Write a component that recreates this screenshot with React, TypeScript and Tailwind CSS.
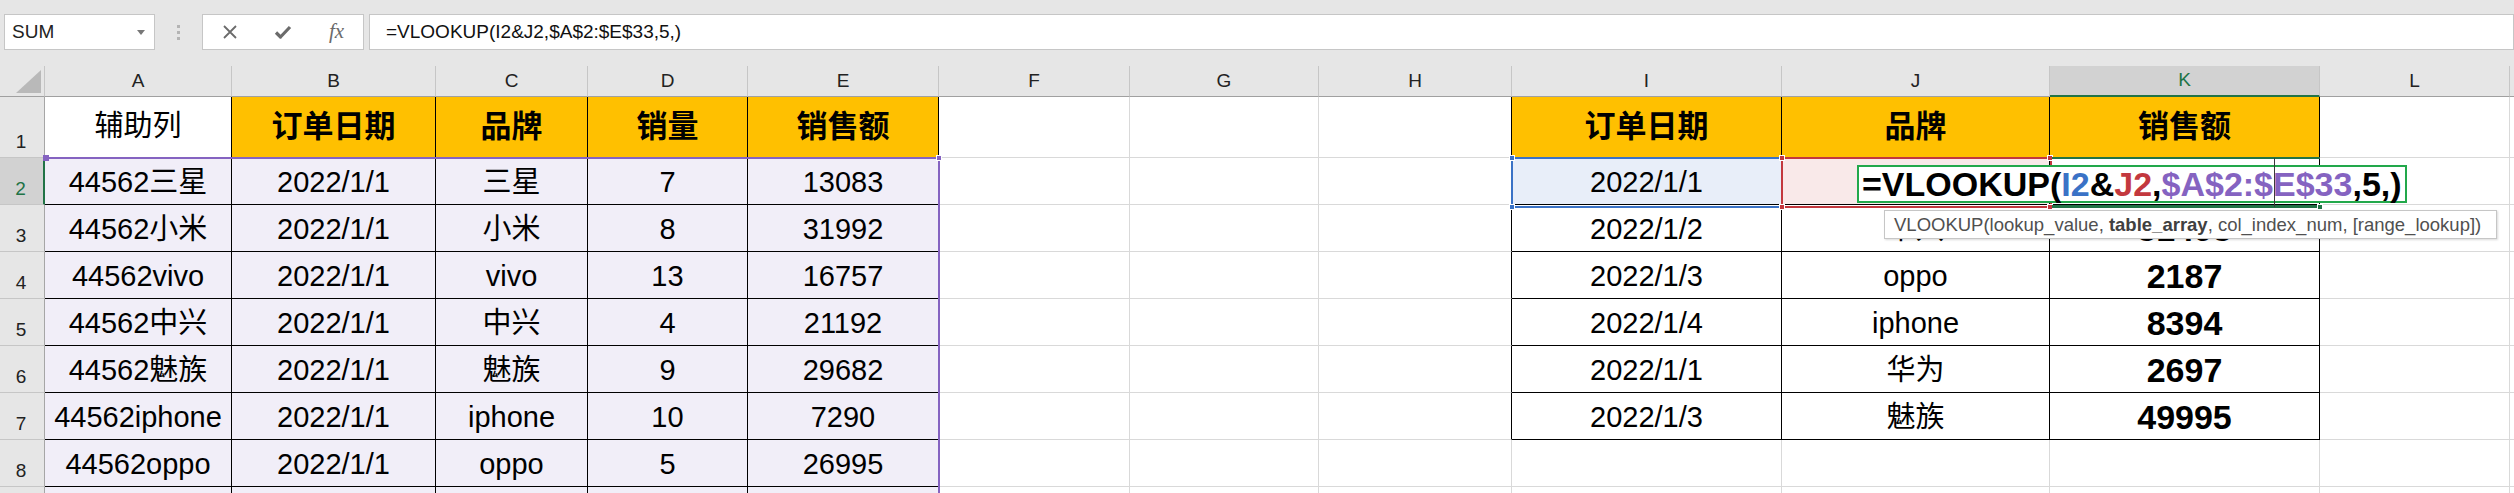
import React from "react";

const letters = ["", "A", "B", "C", "D", "E", "F", "G", "H", "I", "J", "K", "L", "M"];

const leftRows = [
  ["44562三星", "2022/1/1", "三星", "7", "13083"],
  ["44562小米", "2022/1/1", "小米", "8", "31992"],
  ["44562vivo", "2022/1/1", "vivo", "13", "16757"],
  ["44562中兴", "2022/1/1", "中兴", "4", "21192"],
  ["44562魅族", "2022/1/1", "魅族", "9", "29682"],
  ["44562iphone", "2022/1/1", "iphone", "10", "7290"],
  ["44562oppo", "2022/1/1", "oppo", "5", "26995"],
  ["", "", "", "", ""],
];

const rightRows = [
  ["2022/1/1", "", ""],
  ["2022/1/2", "中兴", "31493"],
  ["2022/1/3", "oppo", "2187"],
  ["2022/1/4", "iphone", "8394"],
  ["2022/1/1", "华为", "2697"],
  ["2022/1/3", "魅族", "49995"],
];

// text of a sheet cell, rows numbered like Excel (1..9), columns 1..13
function cellText(r: number, c: number): string {
  if (r === 1) {
    const head: Record<number, string> = { 1: "辅助列", 2: "订单日期", 3: "品牌", 4: "销量", 5: "销售额", 9: "订单日期", 10: "品牌", 11: "销售额" };
    return head[c] ?? "";
  }
  if (c >= 1 && c <= 5) return leftRows[r - 2]?.[c - 1] ?? "";
  if (c >= 9 && c <= 11 && r <= 7) return rightRows[r - 2]?.[c - 9] ?? "";
  return "";
}

function cellClass(r: number, c: number): string {
  const inLeft = c >= 1 && c <= 5;
  const inRight = c >= 9 && c <= 11 && r <= 7;
  let cls = "flex items-center justify-center overflow-hidden whitespace-nowrap border-r border-b ";

  if (r === 1) {
    if (c === 1) return cls + "bg-white border-black text-[29px]";
    if ((c >= 2 && c <= 5) || inRight) return cls + "bg-[#ffc000] border-black text-[31px] font-bold";
    if (c === 8) return cls + "bg-white border-r-black border-b-[#d9d9d9]";
    return cls + "bg-white border-[#d9d9d9]";
  }

  cls += "pt-[3px] text-[29px] ";
  if (inLeft) return cls + "bg-[#f1eef8] border-black";
  if (inRight) {
    if (r === 2 && c === 9) return cls + "bg-[#e8eef9] border-black";
    if (r === 2 && c === 10) return cls + "bg-[#f9e9e9] border-black";
    if (c === 11) return cls + "bg-white border-black text-[34px] font-bold";
    return cls + "bg-white border-black";
  }
  if (c === 8 && r <= 7) return cls + "bg-white border-r-black border-b-[#d9d9d9]";
  return cls + "bg-white border-[#d9d9d9]";
}

function Toolbar() {
  return (
    <div className="flex h-[66px] items-start bg-[#e6e6e6] pl-[4px] pt-[14px]">
      <div className="flex h-[36px] w-[151px] items-center justify-between border border-[#c6c6c6] bg-white pl-[7px] pr-[9px] text-[19px] text-[#222]">
        <span>SUM</span>
        <span className="h-0 w-0 border-x-[4px] border-t-[5px] border-x-transparent border-t-[#777]" />
      </div>
      <div className="flex h-[36px] w-[47px] flex-col items-center justify-center gap-[3px]">
        <span className="h-[3px] w-[3px] bg-[#b4b4b4]" />
        <span className="h-[3px] w-[3px] bg-[#b4b4b4]" />
        <span className="h-[3px] w-[3px] bg-[#b4b4b4]" />
      </div>
      <div className="flex h-[36px] w-[162px] items-center border border-[#c6c6c6] bg-white">
        <div className="flex w-[53px] justify-center">
          <svg width="16" height="16" viewBox="0 0 16 16">
            <path d="M2 2 L14 14 M14 2 L2 14" stroke="#6b6b6b" strokeWidth="1.8" fill="none" />
          </svg>
        </div>
        <div className="flex w-[54px] justify-center">
          <svg width="18" height="16" viewBox="0 0 18 16">
            <path d="M2 8.5 L6.5 13 L16 3" stroke="#6b6b6b" strokeWidth="3.2" fill="none" strokeLinejoin="round" />
          </svg>
        </div>
        <div className="flex w-[53px] justify-center font-['Liberation_Serif',serif] text-[21px] italic text-[#6b6b6b]">
          fx
        </div>
      </div>
      <div className="ml-[5px] flex h-[36px] flex-1 items-center border border-[#c6c6c6] bg-white pl-[16px] text-[19px] text-[#111]">
        =VLOOKUP(I2&amp;J2,$A$2:$E$33,5,)
      </div>
    </div>
  );
}

function Sheet() {
  const rows = [1, 2, 3, 4, 5, 6, 7, 8, 9];
  const cols = [1, 2, 3, 4, 5, 6, 7, 8, 9, 10, 11, 12, 13];
  return (
    <div className="grid grid-cols-[45px_187px_204px_152px_160px_191px_191px_189px_193px_270px_268px_270px_190px_220px] grid-rows-[31px_61px_47px_47px_47px_47px_47px_47px_47px_47px]">
      {/* corner */}
      <div className="relative border-r border-b border-r-[#c6c6c6] border-b-[#a0a0a0] bg-[#e6e6e6]">
        <svg className="absolute left-[16px] top-[4px]" width="26" height="24" viewBox="0 0 26 24">
          <path d="M25 0 L25 23 L0 23 Z" fill="#b9b9b9" />
        </svg>
      </div>
      {cols.map((c) =>
        c === 11 ? (
          <div key={c} className="flex items-center justify-center border-r border-b-2 border-r-[#c6c6c6] border-b-[#217346] bg-[#d2d2d2] text-[19px] text-[#217346]">
            {letters[c]}
          </div>
        ) : (
          <div key={c} className="flex items-center justify-center border-r border-b border-r-[#c6c6c6] border-b-[#a0a0a0] bg-[#e6e6e6] text-[19px] text-[#222]">
            {letters[c]}
          </div>
        )
      )}
      {rows.map((r) => (
        <React.Fragment key={r}>
          {r === 2 ? (
            <div className="flex items-end justify-center border-r-2 border-b border-r-[#217346] border-b-[#c6c6c6] bg-[#d2d2d2] pb-[1px] pr-[2px] text-[19px] text-[#217346]">
              {r}
            </div>
          ) : (
            <div className="flex items-end justify-center border-r border-b border-r-[#a6a6a6] border-b-[#c6c6c6] bg-[#e6e6e6] pb-[1px] pr-[2px] text-[19px] text-[#222]">
              {r}
            </div>
          )}
          {cols.map((c) => (
            <div key={c} className={cellClass(r, c)}>
              {cellText(r, c)}
            </div>
          ))}
        </React.Fragment>
      ))}
    </div>
  );
}

export default function App() {
  return (
    <div className="relative h-[493px] w-[2514px] overflow-hidden bg-white font-['Liberation_Sans','Noto_Sans_CJK_SC',sans-serif] text-black">
      <Toolbar />
      <Sheet />

      {/* range reference A2:E33 */}
      <div className="absolute left-[45px] top-[157px] h-[2px] w-[895px] bg-[#8563c1]" />
      <div className="absolute left-[938px] top-[157px] h-[340px] w-[2px] bg-[#8563c1]" />
      <div className="absolute left-[43px] top-[155px] h-[6px] w-[6px] bg-[#8563c1]" />
      <div className="absolute left-[936px] top-[155px] h-[6px] w-[6px] border border-white bg-[#8563c1]" />

      {/* I2 and J2 references */}
      <div className="absolute left-[1511px] top-[157px] h-[51px] w-[272px] border-2 border-[#3a72c6]" />
      <div className="absolute left-[1781px] top-[157px] h-[51px] w-[271px] border-2 border-[#c3383e]" />
      <div className="absolute left-[1509px] top-[155px] h-[6px] w-[6px] border border-white bg-[#3a72c6]" />
      <div className="absolute left-[1509px] top-[204px] h-[6px] w-[6px] border border-white bg-[#3a72c6]" />
      <div className="absolute left-[1779px] top-[155px] h-[6px] w-[6px] border border-white bg-[#c3383e]" />
      <div className="absolute left-[1779px] top-[204px] h-[6px] w-[6px] border border-white bg-[#c3383e]" />
      <div className="absolute left-[2047px] top-[155px] h-[6px] w-[6px] border border-white bg-[#c3383e]" />
      <div className="absolute left-[2047px] top-[204px] h-[6px] w-[6px] border border-white bg-[#c3383e]" />

      {/* active cell K2 */}
      <div className="absolute left-[2052px] top-[157px] h-[2px] w-[268px] bg-[#217346]" />
      <div className="absolute left-[2052px] top-[205px] h-[3px] w-[268px] bg-[#217346]" />
      <div className="absolute left-[2317px] top-[204px] h-[6px] w-[6px] border border-white bg-[#217346]" />

      {/* in-cell editing */}
      <div className="absolute left-[1857px] top-[165px] flex h-[38px] w-[550px] items-center border-2 border-[#22a84b] bg-white pl-[3px] text-[34px] font-bold leading-none">
        <span>=VLOOKUP(</span>
        <span className="text-[#3a72c6]">I2</span>
        <span>&amp;</span>
        <span className="text-[#c3383e]">J2</span>
        <span>,</span>
        <span className="text-[#8563c1]">$A$2:$E$33</span>
        <span>,5,)</span>
      </div>
      <div className="absolute left-[2274px] top-[158px] h-[49px] w-px bg-[#3a3a3a]" />

      {/* function tooltip */}
      <div className="absolute left-[1884px] top-[210px] flex h-[29px] w-[613px] items-center border border-[#c6c6c6] bg-white pl-[9px] text-[18.5px] text-[#505050] shadow-[1px_1px_2px_rgba(0,0,0,0.15)]">
        VLOOKUP(lookup_value,&nbsp;<b className="font-bold text-[#404040]">table_array</b>, col_index_num, [range_lookup])
      </div>
    </div>
  );
}
